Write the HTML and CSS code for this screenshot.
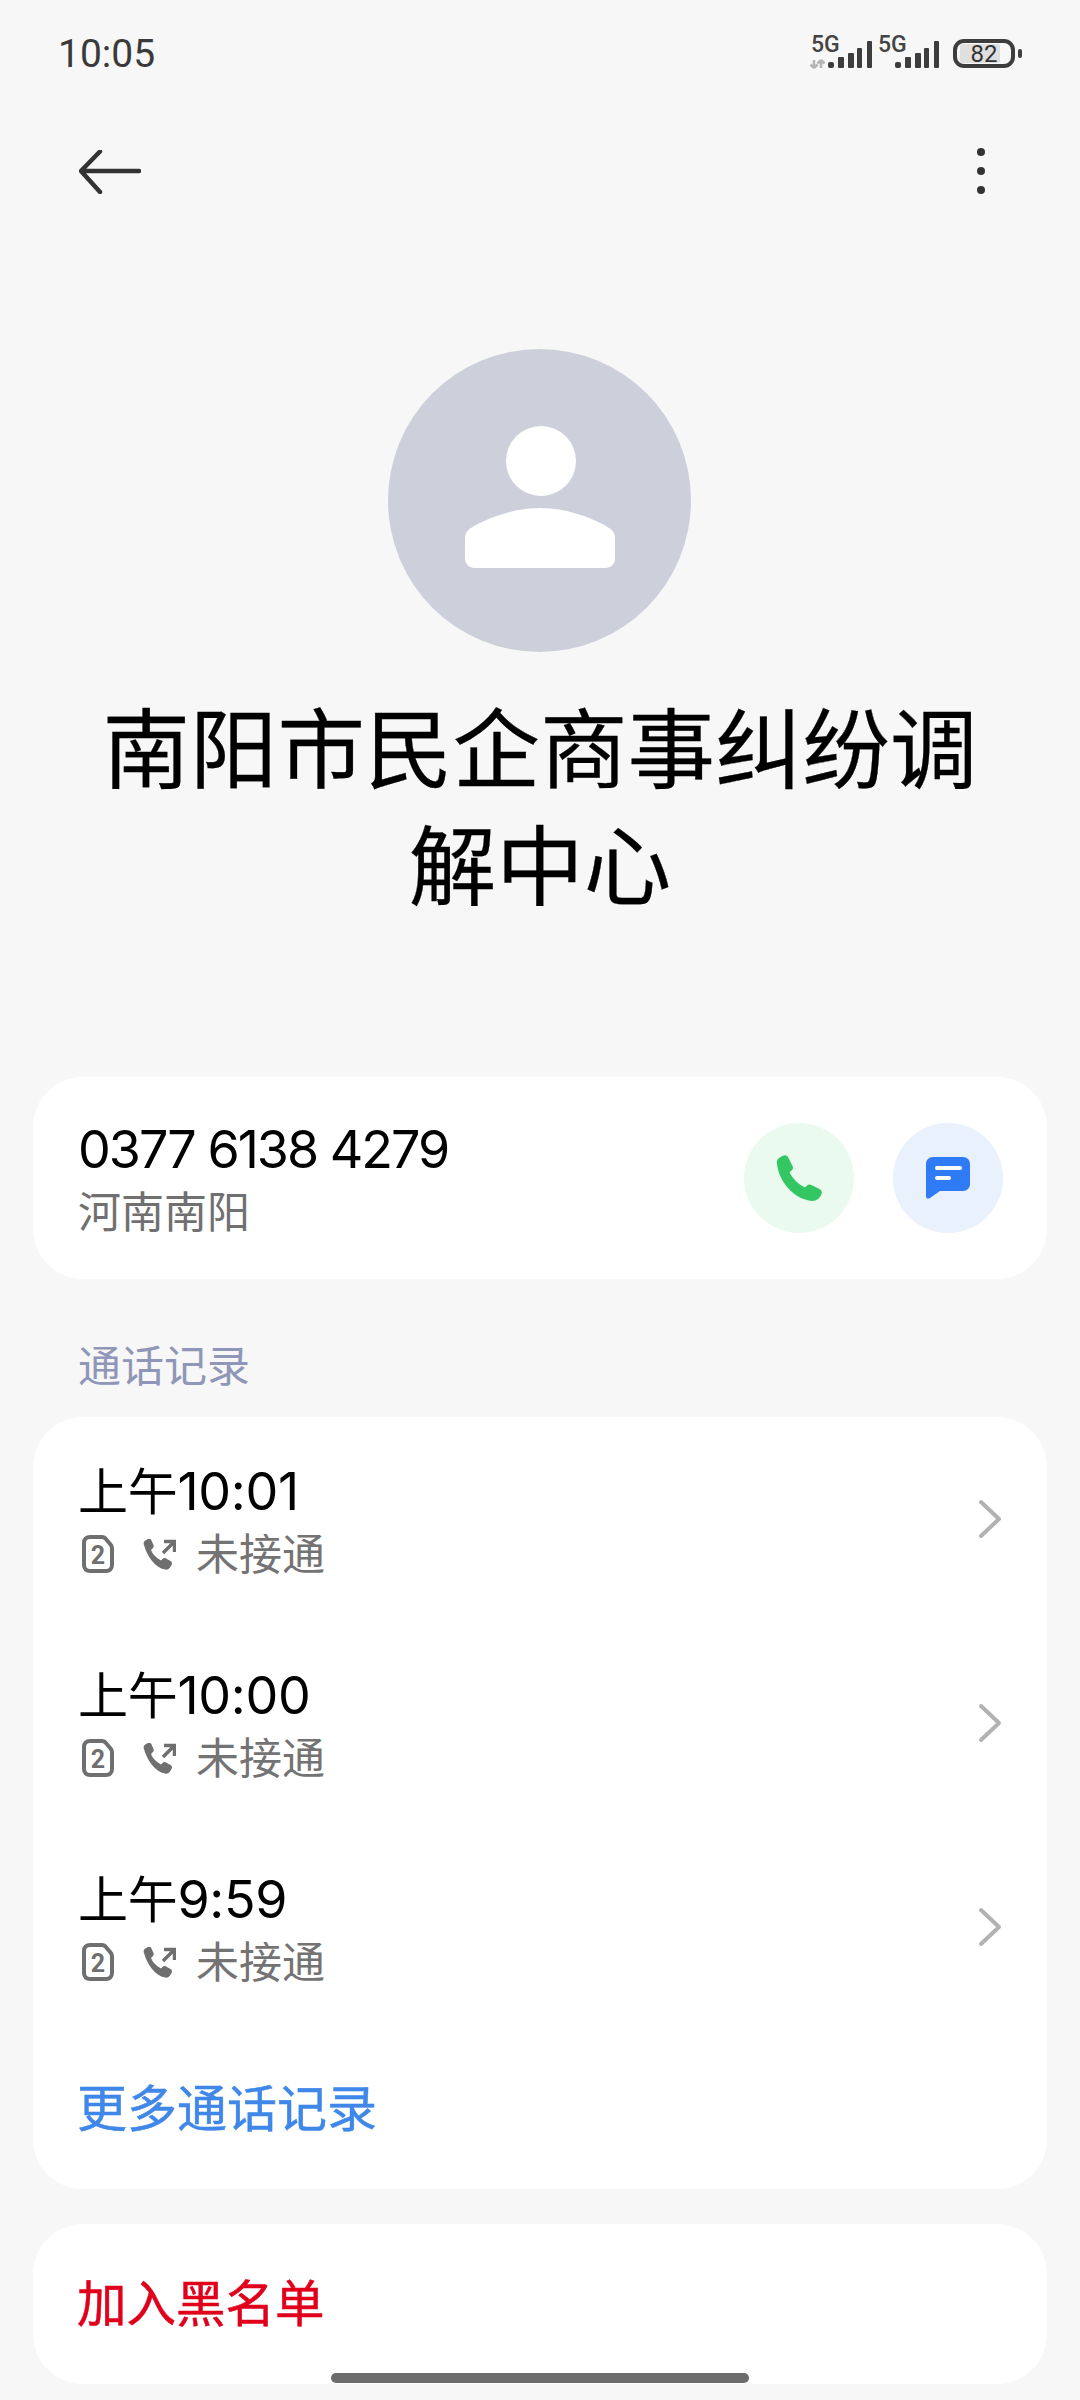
FILE: index.html
```html
<!DOCTYPE html>
<html lang="zh-CN">
<head>
<meta charset="utf-8">
<title>南阳市民企商事纠纷调解中心</title>
<link rel="stylesheet" href="styles.css">
</head>
<body>
<div class="page">
  <header class="status">
    <span class="clock">10:05</span>
    <svg class="status-icons" width="214" height="40" viewBox="0 0 214 40">
      <text class="net" x="2" y="22">5G</text>
      <path class="arrows" d="M5 38v-8M5 38l-3.500-3.500M5 38l3.500-3.500M12 30v8M12 30l-3.500 3.500M12 30l3.500 3.500"/>
      <g class="bars">
        <rect x="19" y="32" width="6" height="6" rx="2"/><rect x="29" y="27" width="6" height="11" rx="1"/><rect x="39" y="23" width="6" height="15" rx="1"/><rect x="48" y="18" width="5" height="20" rx="1"/><rect x="58" y="11" width="5" height="27" rx="1"/>
      </g>
      <text class="net" x="69" y="22">5G</text>
      <g class="bars">
        <rect x="86" y="32" width="6" height="6" rx="2"/><rect x="96" y="27" width="6" height="11" rx="1"/><rect x="106" y="23" width="6" height="15" rx="1"/><rect x="115" y="18" width="5" height="20" rx="1"/><rect x="125" y="11" width="5" height="27" rx="1"/>
      </g>
      <rect class="batt-fill" x="151" y="14" width="40" height="19" rx="2"/>
      <rect class="batt" x="146" y="11" width="58" height="25" rx="9"/>
      <text class="batt-num" x="175" y="32">82</text>
      <rect class="nub" x="209" y="19" width="4" height="9" rx="2"/>
    </svg>
  </header>

  <nav class="toolbar">
    <svg width="62" height="44" viewBox="0 0 62 44"><path class="back" d="M60 21H3M21 1.500L2 21l19 21"/></svg>
    <svg class="more" width="12" height="50" viewBox="0 0 12 50"><circle cx="6" cy="6" r="4"/><circle cx="6" cy="25" r="4"/><circle cx="6" cy="44" r="4"/></svg>
  </nav>

  <section class="hero">
    <div class="avatar">
      <svg width="150" height="142" viewBox="0 0 150 142"><circle cx="76" cy="35" r="35" fill="#fff"/><path fill="#fff" d="M0 112c0-6 4-9 9-12C25 91 50 82 75 82s50 9 66 18c5 3 9 6 9 12v20c0 6-4 10-10 10H10c-6 0-10-4-10-10z"/></svg>
    </div>
    <h1 class="name">南阳市民企商事纠纷调解中心</h1>
  </section>

  <section class="card contact">
    <div class="contact-text">
      <div class="number">0377 6138 4279</div>
      <div class="region">河南南阳</div>
    </div>
    <div class="actions">
      <div class="round green">
        <svg width="46" height="46" viewBox="0 0 46 46"><path fill="#33c764" d="M1 9C0 5 3 2 8 .5c2-.5 3.500.5 4.500 2.500l4 8c1 2 .5 3.500-1.500 5l-1.500 1c2.500 6 8.500 12 15.500 15.500l1.500-1.500c1.500-1.500 3-2 5-1l8 4c2 1 2.800 3 2 5-1.500 4-4.500 7-9.500 7C18 44 3 27 1 9z"/></svg>
      </div>
      <div class="round blue">
        <svg width="44" height="42" viewBox="0 0 44 42"><path fill="#2f7bf5" d="M7 0h30c4 0 7 3 7 7v20c0 4-3 7-7 7H14L4 41c-2 1.300-4 .5-4-2V7c0-4 3-7 7-7z"/><path stroke="#fff" stroke-width="4" stroke-linecap="round" d="M11 11h23M11 21h12"/></svg>
      </div>
    </div>
  </section>

  <h2 class="section-label">通话记录</h2>

  <section class="card log">
    <div class="row">
      <div class="row-text">
        <div class="row-time"><span class="ampm">上午</span>10:01</div>
        <div class="row-sub">
          <svg class="sim" width="32" height="38" viewBox="0 0 32 38"><path class="sim-edge" d="M8 2h12c1.500 0 2.500.5 3.500 1.500l5 6c1 1 1.500 2 1.500 3.500v17c0 4-2.500 6-6 6H8c-3.500 0-6-2-6-6V8c0-4 2.500-6 6-6z"/><text class="sim-num" x="16" y="29">2</text></svg>
          <svg class="callout" width="33" height="31" viewBox="0 0 33 31"><path fill="#6f6f6f" d="M1 6c-1-2 0-4 2-5l2-1c1.500-.5 3 0 3.500 1.500l2 4.500c.5 1.500.2 2.500-1 3.500L8 11c1.500 4 5 8 10 10.500l1.500-1.500c1-1 2-1.200 3.500-.5l4.500 2.500c1.500 1 2 2.500 1 4l-1.500 2.500c-1 1.500-2.500 2.500-5 2C12 29 4 17 1 6z"/><path class="arrow-out" d="M20 14L31 3M21 2.500h10.500V13"/></svg>
          <span>未接通</span>
        </div>
      </div>
      <svg class="chev" width="24" height="40" viewBox="0 0 24 40"><path d="M3 3l18 17L3 37"/></svg>
    </div>
    <div class="row">
      <div class="row-text">
        <div class="row-time"><span class="ampm">上午</span>10:00</div>
        <div class="row-sub">
          <svg class="sim" width="32" height="38" viewBox="0 0 32 38"><path class="sim-edge" d="M8 2h12c1.500 0 2.500.5 3.500 1.500l5 6c1 1 1.500 2 1.500 3.500v17c0 4-2.500 6-6 6H8c-3.500 0-6-2-6-6V8c0-4 2.500-6 6-6z"/><text class="sim-num" x="16" y="29">2</text></svg>
          <svg class="callout" width="33" height="31" viewBox="0 0 33 31"><path fill="#6f6f6f" d="M1 6c-1-2 0-4 2-5l2-1c1.500-.5 3 0 3.500 1.500l2 4.500c.5 1.500.2 2.500-1 3.500L8 11c1.500 4 5 8 10 10.500l1.500-1.500c1-1 2-1.200 3.500-.5l4.500 2.500c1.500 1 2 2.500 1 4l-1.500 2.500c-1 1.500-2.500 2.500-5 2C12 29 4 17 1 6z"/><path class="arrow-out" d="M20 14L31 3M21 2.500h10.500V13"/></svg>
          <span>未接通</span>
        </div>
      </div>
      <svg class="chev" width="24" height="40" viewBox="0 0 24 40"><path d="M3 3l18 17L3 37"/></svg>
    </div>
    <div class="row">
      <div class="row-text">
        <div class="row-time"><span class="ampm">上午</span>9:59</div>
        <div class="row-sub">
          <svg class="sim" width="32" height="38" viewBox="0 0 32 38"><path class="sim-edge" d="M8 2h12c1.500 0 2.500.5 3.500 1.500l5 6c1 1 1.500 2 1.500 3.500v17c0 4-2.500 6-6 6H8c-3.500 0-6-2-6-6V8c0-4 2.500-6 6-6z"/><text class="sim-num" x="16" y="29">2</text></svg>
          <svg class="callout" width="33" height="31" viewBox="0 0 33 31"><path fill="#6f6f6f" d="M1 6c-1-2 0-4 2-5l2-1c1.500-.5 3 0 3.500 1.500l2 4.500c.5 1.500.2 2.500-1 3.500L8 11c1.500 4 5 8 10 10.500l1.500-1.500c1-1 2-1.200 3.500-.5l4.500 2.500c1.500 1 2 2.500 1 4l-1.500 2.500c-1 1.500-2.500 2.500-5 2C12 29 4 17 1 6z"/><path class="arrow-out" d="M20 14L31 3M21 2.500h10.500V13"/></svg>
          <span>未接通</span>
        </div>
      </div>
      <svg class="chev" width="24" height="40" viewBox="0 0 24 40"><path d="M3 3l18 17L3 37"/></svg>
    </div>
    <div class="more-link">更多通话记录</div>
  </section>

  <section class="card block">加入黑名单</section>
  <div class="home-bar"></div>
</div>
</body>
</html>
```

FILE: styles.css
```css
* { box-sizing: border-box; }
html, body { margin: 0; padding: 0; }
body {
  background: #f7f7f7;
  font-family: "Inter", "Noto Sans CJK SC", sans-serif;
  color: #000;
}
.page {
  position: relative;
  width: 1080px;
  height: 2400px;
  overflow: hidden;
  display: flex;
  flex-direction: column;
}
.status {
  height: 108px;
  flex: none;
  display: flex;
  justify-content: space-between;
  align-items: center;
  padding: 0 57px 0 58px;
}
.clock { font-family: "Roboto", sans-serif; font-size: 39px; line-height: 1; color: #3a3a3a; }
.status-icons { margin-bottom: 8px; }
.net { font: 500 23px "Roboto", sans-serif; fill: #444; }
.arrows { fill: none; stroke: #b5b5b5; stroke-width: 2.500; }
.bars rect { fill: #3d3d3d; }
.batt { fill: none; stroke: #3d3d3d; stroke-width: 4; }
.batt-fill { fill: #dfdfdf; }
.batt-num { font: 400 24px "Roboto", sans-serif; fill: #333; text-anchor: middle; }
.nub { fill: #3d3d3d; }

.toolbar {
  height: 126px;
  flex: none;
  display: flex;
  justify-content: space-between;
  align-items: center;
  padding: 2px 93px 0 79px;
}
.back { fill: none; stroke: #333; stroke-width: 4.500; stroke-linecap: round; stroke-linejoin: round; }
.more { margin-top: -2px; }
.more circle { fill: #333; }

.hero {
  flex: none;
  display: flex;
  flex-direction: column;
  align-items: center;
  padding-top: 115px;
}
.avatar {
  width: 303px;
  height: 303px;
  margin-right: 1px;
  border-radius: 50%;
  background: #cdcfdb;
  display: flex;
  align-items: center;
  justify-content: center;
  padding-bottom: 8px;
}
.name {
  margin: 40px 0 0;
  width: 900px;
  font-size: 87.500px;
  font-weight: 400;
  line-height: 117px;
  text-align: center;
  -webkit-text-stroke: 0.3px #000;
}

.card {
  flex: none;
  margin: 0 33px;
  background: #fff;
  border-radius: 50px;
}
.contact {
  margin-top: 151px;
  height: 202px;
  display: flex;
  justify-content: space-between;
  align-items: center;
  padding: 0 44px 0 45px;
}
.number { font-size: 52px; line-height: 64px; letter-spacing: -2px; margin-top: 2px; }
.region { font-size: 43px; line-height: 56px; color: #707070; margin-top: 2px; }
.actions { display: flex; gap: 39px; }
.round {
  width: 110px;
  height: 110px;
  border-radius: 50%;
  display: flex;
  align-items: center;
  justify-content: center;
}
.green { background: #ebfaef; }
.blue { background: #e9f1fd; }

.section-label {
  margin: 0;
  padding: 57px 0 0 78px;
  height: 138px;
  flex: none;
  font-size: 43px;
  font-weight: 400;
  line-height: 60px;
  color: #8f96b8;
}

.log { height: 772px; padding-top: 1px; }
.row {
  height: 204px;
  display: flex;
  justify-content: space-between;
  align-items: center;
  padding: 0 45px 0 45px;
}
.row-time { font-size: 52px; line-height: 62px; margin-top: 2px; letter-spacing: -0.3px; }
.ampm { font-size: 50px; }
.row-sub {
  display: flex;
  align-items: center;
  font-size: 43px;
  line-height: 54px;
  color: #737373;
  margin-top: 4px;
}
.sim { margin-left: 4px; }
.callout { margin-left: 29px; margin-right: 20px; }
.sim-edge { fill: none; stroke: #6f6f6f; stroke-width: 4; }
.sim-num { font: 700 25px "Roboto", sans-serif; fill: #6f6f6f; text-anchor: middle; }
.arrow-out { fill: none; stroke: #6f6f6f; stroke-width: 3.500; }
.chev { margin-top: -2px; }
.chev path { fill: none; stroke: #b2b2b2; stroke-width: 4; stroke-linecap: round; stroke-linejoin: round; }
.more-link {
  padding: 47px 0 0 44px;
  font-size: 50px;
  line-height: 64px;
  color: #3f87e8;
  -webkit-text-stroke: 0.5px #3f87e8;
}
.block {
  margin-top: 35px;
  height: 160px;
  padding: 48px 0 0 44px;
  font-size: 49.500px;
  line-height: 64px;
  color: #e0001b;
  -webkit-text-stroke: 0.5px #e0001b;
}
.home-bar {
  position: absolute;
  left: 331px;
  top: 2373px;
  width: 418px;
  height: 10px;
  border-radius: 5px;
  background: #6c6c6c;
}
```
